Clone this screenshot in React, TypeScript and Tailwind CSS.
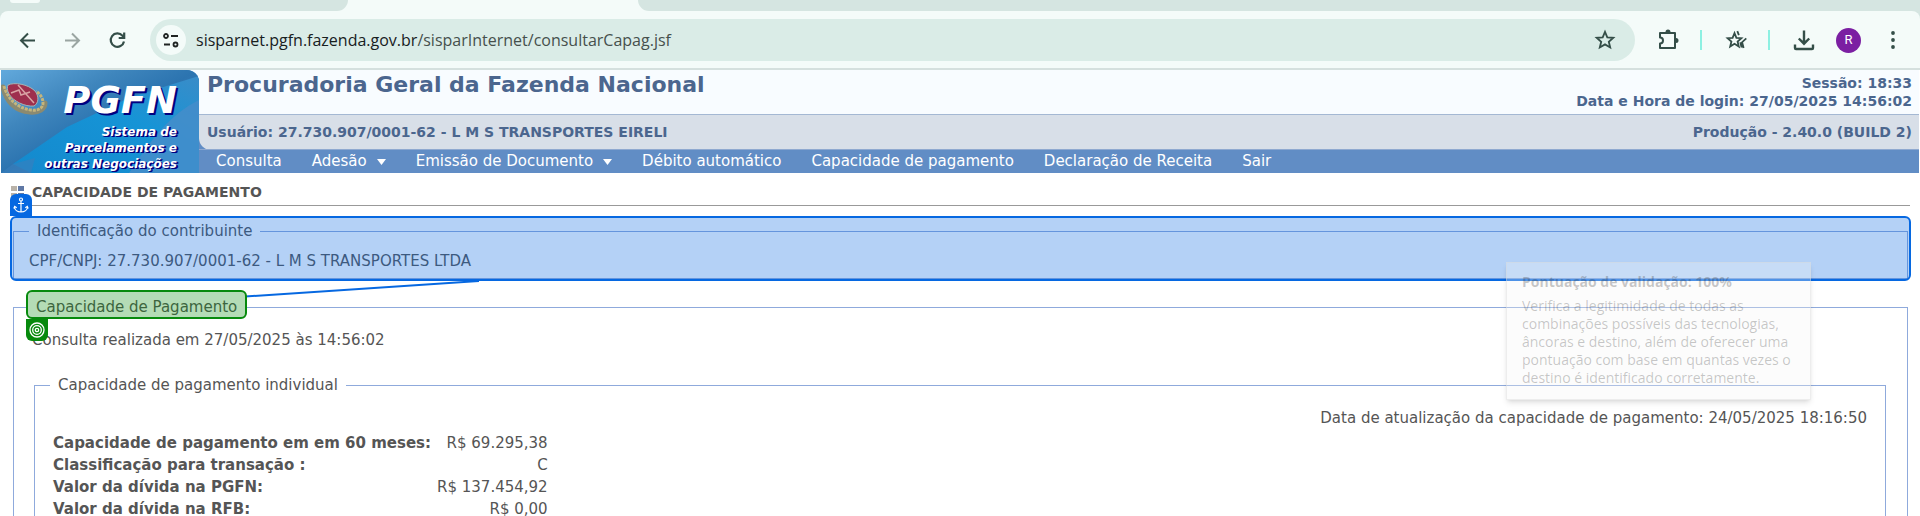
import React, { ReactNode } from 'react';

const icon = 'fill-none stroke-[#344e48]';

function NavIcon({ label, children }: { label: string; children: ReactNode }) {
  return (
    <button type="button" aria-label={label} className="flex size-6 shrink-0 items-center justify-center">
      {children}
    </button>
  );
}

function Star({ extra = false }: { extra?: boolean }) {
  return (
    <svg viewBox="0 0 22 22" className={`size-[22px] ${icon}`} strokeWidth="1.8">
      {extra ? (
        <>
          <path d="M9.500 4.200l1.900 4.600 5 .4-3.800 3.300 1.200 5-4.300-2.700-4.300 2.700 1.200-5-3.800-3.300 5-.4z" />
          <path d="M12.300 2.200l1.600 4M21.300 9.300l-4.200 3.900 1.500 5.700M15.300 13.300l1.300 5.200" />
        </>
      ) : (
        <path d="M11 2.800l2.300 5.500 6 .5-4.500 3.900 1.400 5.800-5.200-3.100-5.200 3.100 1.400-5.800-4.500-3.900 6-.5z" />
      )}
    </svg>
  );
}

function Browser() {
  return (
    <header className="bg-[#d5e5e1]">
      <div className="flex h-[11px] bg-[#f4fbf9]">
        <div className="flex w-[348px] items-start rounded-br-[14px] bg-[#d5e5e1] pl-[10px]">
          <div className="h-[3px] w-[30px] rounded-b-full bg-[#f4fbf9]" />
        </div>
        <div className="w-[290px]" />
        <div className="flex-1 rounded-bl-[14px] bg-[#d5e5e1]" />
      </div>
      <div className="flex h-[59px] items-start rounded-t-lg border-b-2 border-[#d5e0de] bg-[#f4fbf9] pt-2 pr-[15px] pl-[15px]">
        <div className="flex h-[42px] items-center gap-[21px]">
          <NavIcon label="Voltar">
            <svg viewBox="0 0 24 24" className={`size-6 ${icon}`} strokeWidth="2"><path d="M20 12.500H6M13 5.500l-7 7 7 7" /></svg>
          </NavIcon>
          <NavIcon label="Avançar">
            <svg viewBox="0 0 24 24" className="size-6 fill-none stroke-[#9aa5a2]" strokeWidth="2"><path d="M5 12.500h14M12 5.500l7 7-7 7" /></svg>
          </NavIcon>
          <NavIcon label="Recarregar">
            <svg viewBox="0 0 24 24" className={`size-6 ${icon}`} strokeWidth="2.200"><path d="M19 13.500A6.700 6.700 0 1 1 17.500 7.700L19 9.300M19.200 4.500V10h-5.500" /></svg>
          </NavIcon>
        </div>
        <div className="ml-[21px] flex h-[42px] flex-1 items-center rounded-full bg-[#daece7] pr-[18px] pl-[6px] font-['Open_Sans','Noto_Sans',sans-serif]">
          <button type="button" aria-label="Informações do site" className="flex size-[30px] items-center justify-center rounded-full bg-[#f4fbf9]">
            <svg viewBox="0 0 18 18" className="size-[18px] fill-none stroke-[#202423]" strokeWidth="1.800">
              <circle cx="4" cy="5" r="2" /><path d="M9 5h7M2 13.500h6" /><circle cx="13.500" cy="13.500" r="2" />
            </svg>
          </button>
          <a href="#url" className="ml-[10px] flex-1 text-[16px] leading-6 text-[#46504d]">
            <span className="text-[#17201e]">sisparnet.pgfn.fazenda.gov.br</span>/sisparInternet/consultarCapag.jsf
          </a>
          <NavIcon label="Favoritar"><Star /></NavIcon>
        </div>
        <div className="flex h-[42px] items-center pl-[21px]">
          <NavIcon label="Extensões">
            <svg viewBox="0 0 24 24" className={`size-6 ${icon}`} strokeWidth="2">
              <path d="M4 5h15v15H4v-4.500c4 0 4-6 0-6z" strokeLinejoin="round" />
              <path d="M9.500 4a2.500 2.500 0 0 1 5 0zM20 10a2.500 2.500 0 0 1 0 5z" className="fill-[#344e48]" stroke="none" />
            </svg>
          </NavIcon>
          <span className="ml-5 h-5 w-[2px] bg-[#8df0e2]" />
          <span className="ml-[22px] flex"><NavIcon label="Todos os favoritos"><Star extra /></NavIcon></span>
          <span className="ml-5 h-5 w-[2px] bg-[#8df0e2]" />
          <span className="ml-[22px] flex"><NavIcon label="Downloads">
            <svg viewBox="0 0 24 24" className={`size-6 ${icon}`} strokeWidth="2.400"><path d="M12 2.500v13M6.800 10.500l5.200 5.200 5.200-5.200M3 16.500v3.500a1 1 0 0 0 1 1h16a1 1 0 0 0 1-1v-3.500" /></svg>
          </NavIcon></span>
          <button type="button" aria-label="Perfil" className="ml-5 size-[25px] rounded-full bg-[#7b1fa2] font-['Roboto',sans-serif] text-[13px] text-white">R</button>
          <span className="ml-5 flex"><NavIcon label="Menu">
            <svg viewBox="0 0 24 24" className="size-6 fill-[#344e48]"><circle cx="12" cy="5" r="1.900" /><circle cx="12" cy="12" r="1.900" /><circle cx="12" cy="19" r="1.900" /></svg>
          </NavIcon></span>
        </div>
      </div>
    </header>
  );
}

function Brand() {
  return (
    <div className="shrink-0 bg-[#f8fcff]">
      <div className="relative h-full w-[198px] overflow-hidden rounded-tr-xl bg-[#3e83c3]">
        <svg viewBox="0 0 198 103" preserveAspectRatio="none" className="absolute inset-0 size-full">
          <defs>
            <linearGradient id="sky" x1="0" y1="0" x2="1" y2="1">
              <stop offset="0" stopColor="#62a9dc" /><stop offset=".3" stopColor="#3f86bd" /><stop offset=".5" stopColor="#2c74b0" /><stop offset="1" stopColor="#5090cc" />
            </linearGradient>
            <linearGradient id="beam" x1="0" y1="1" x2="1" y2="0">
              <stop offset="0" stopColor="#1489cd" /><stop offset=".6" stopColor="#1694d6" /><stop offset="1" stopColor="#3a8cc8" />
            </linearGradient>
          </defs>
          <path d="M0 0h198v103H0z" fill="url(#sky)" />
          <path d="M12 94L66 57 130 27l68-21v97H30z" fill="url(#beam)" />
          <path d="M128 103C150 70 168 45 198 30v73z" fill="#458dca" opacity=".85" />
          <path d="M12 94l22-6-4 15H0z" fill="#3b7fbd" opacity=".6" />
          <path d="M2 17c3 14 12 24 27 25 9 1 15-3 15-9" fill="none" stroke="#8b8a70" strokeWidth="5" strokeLinecap="round" />
          <path d="M3 16c3 12 13 22 27 24 7 1 12-2 12-7 0-5-3-9-7-12" fill="none" stroke="#c5b57c" strokeWidth="3" strokeDasharray="3 1" />
          <path d="M7 15C13 12 27 14 34 21c4 5 4 12-1 15-9 1-21-5-25-12-2-4-2-7-1-9z" fill="#9e2f4e" stroke="#a7b4b4" strokeWidth="1" />
          <path d="M17 15l16 18M10 23l8-3 2 5 9-3" fill="none" stroke="#d9a3a4" strokeWidth="1.500" />
        </svg>
        <div className="relative pt-[10px] pr-[22px] text-right font-bold text-white italic [text-shadow:2px_2px_0_#000080]">
          <div className="text-[37px] leading-[42px]">PGFN</div>
          <div className="pt-[2px] text-[12px] leading-4 [text-shadow:1px_1px_0_#000080,2px_1px_0_#000080]">Sistema de<br />Parcelamentos e<br />outras Negociações</div>
        </div>
      </div>
    </div>
  );
}

const menu: { label: string; arrow?: boolean }[] = [
  { label: 'Consulta' },
  { label: 'Adesão', arrow: true },
  { label: 'Emissão de Documento', arrow: true },
  { label: 'Débito automático' },
  { label: 'Capacidade de pagamento' },
  { label: 'Declaração de Receita' },
  { label: 'Sair' },
];

function SiteHeader() {
  return (
    <div className="mr-px ml-px flex bg-[#618dc5]">
      <Brand />
      <div className="min-w-0 flex-1 font-bold text-[#4b668e]">
        <div className="rounded-bl-xl bg-[#d8dfe8]">
          <div className="flex h-[45px] justify-between border-b border-[#a4b8d3] bg-[#f8fcff] pr-[7px] pl-2">
            <h1 className="text-[22px] leading-[30px]">Procuradoria Geral da Fazenda Nacional</h1>
            <div className="pt-1 text-right text-[14px] leading-[18px]">Sessão: 18:33<br />Data e Hora de login: 27/05/2025 14:56:02</div>
          </div>
          <div className="flex h-[35px] items-center justify-between border-b border-[#8fa9d0] pr-[7px] pl-2 text-[14px]">
            <span>Usuário: 27.730.907/0001-62 - L M S TRANSPORTES EIRELI</span>
            <span>Produção - 2.40.0 (BUILD 2)</span>
          </div>
        </div>
        <nav className="flex h-[23px] items-center gap-[30px] pl-[17px] text-[15px] font-normal text-white">
          {menu.map((m) => (
            <a key={m.label} href="#menu" className="flex items-center gap-[10px]">
              {m.label}
              {m.arrow && <svg viewBox="0 0 9 6" className="h-[6px] w-[9px] fill-white"><path d="M0 0h9L4.500 6z" /></svg>}
            </a>
          ))}
        </nav>
      </div>
    </div>
  );
}

const rows = [
  ['Capacidade de pagamento em em 60 meses:', 'R$ 69.295,38'],
  ['Classificação para transação :', 'C'],
  ['Valor da dívida na PGFN:', 'R$ 137.454,92'],
  ['Valor da dívida na RFB:', 'R$ 0,00'],
];

export default function App() {
  return (
    <div className="h-screen overflow-hidden bg-white font-['DejaVu_Sans',sans-serif] text-[15px] text-[#555]">
      <Browser />
      <SiteHeader />
      <main className="pr-3 pl-[13px]">
        <h2 className="-mx-[2px] flex h-[33px] items-center gap-[7px] border-b border-[#999] pt-[6px] text-[14px] font-bold">
          <svg viewBox="0 0 14 14" className="size-[14px]">
            <path d="M0 1h6v5H0zM0 8h6v5H0z" fill="#b9b2a8" /><path d="M7 1h6v5H7zM7 8h6v5H7z" fill="#5f78a5" />
          </svg>
          CAPACIDADE DE PAGAMENTO
        </h2>
        <section className="relative mt-[13px]">
          <fieldset className="h-[60px] border border-[#8faadc] px-[15px]">
            <legend className="px-2 leading-6">Identificação do contribuinte</legend>
            <p className="pt-[6px] leading-6">CPF/CNPJ: 27.730.907/0001-62 - L M S TRANSPORTES LTDA</p>
          </fieldset>
          <div className="absolute -inset-x-[3px] -top-[3px] -bottom-[2px] rounded-md border-2 border-[#0668e1] bg-[#0668e1]/30" />
          <div className="absolute -top-[25px] -left-[3px] flex size-[22px] items-center justify-center rounded-t-md bg-[#0668e1]">
            <svg viewBox="0 0 16 16" className="size-4 fill-none stroke-white" strokeWidth="1.200"><circle cx="8" cy="2.500" r="1.500" /><path d="M8 4v11M5 6.500h6M1.500 9.500c0 3.500 3 5.500 6.500 5.500s6.500-2 6.500-5.500M.8 11.500l.9-2.200 2 1.400M15.200 11.500l-.9-2.200-2 1.400" /></svg>
          </div>
          <svg viewBox="0 0 234 18" className="absolute top-[61px] left-[232px] h-[18px] w-[234px] fill-none stroke-[#0668e1]" strokeWidth="2"><path d="M0 16.500L234 1" /></svg>
        </section>
        <section className="mt-4">
          <fieldset className="border border-[#8faadc] px-[14px]">
            <legend className="relative px-2 leading-6">
              Capacidade de Pagamento
              <span className="absolute -inset-x-[2px] -top-[5px] bottom-0 rounded-md border-2 border-[#078a0d] bg-[#078a0d]/30" />
              <span className="absolute top-6 -left-[2px] z-10 flex size-[22px] items-center justify-center rounded-b-md bg-[#078a0d]">
                <svg viewBox="0 0 16 16" className="size-4 fill-none stroke-white" strokeWidth="1.300"><circle cx="8" cy="8" r="7" /><circle cx="8" cy="8" r="4.300" /><circle cx="8" cy="8" r="1.700" /></svg>
              </span>
            </legend>
            <p className="pt-[9px] pl-1 leading-6">Consulta realizada em 27/05/2025 às 14:56:02</p>
            <fieldset className="mt-[21px] mr-[7px] ml-[6px] h-[200px] border border-[#8faadc] px-[15px]">
              <legend className="px-2 leading-6">Capacidade de pagamento individual</legend>
              <p className="pt-[9px] pr-[3px] text-right leading-6">Data de atualização da capacidade de pagamento: 24/05/2025 18:16:50</p>
              <table className="mt-[2px] ml-[2px] leading-[22px]">
                <tbody>
                  {rows.map(([k, v]) => (
                    <tr key={k}><th scope="row" className="pr-[6px] pl-px text-left text-[15px]">{k}</th><td className="text-right">{v}</td></tr>
                  ))}
                </tbody>
              </table>
            </fieldset>
          </fieldset>
        </section>
      </main>
      <aside className="absolute top-[262px] right-[109px] w-[305px] border border-[#d8d8d8]/40 bg-[#f6f6f6]/30 px-[15px] pt-[10px] pb-3 font-['Open_Sans','Noto_Sans',sans-serif] text-[14px] leading-[18px] text-[#222]/25 shadow-md shadow-black/10">
        <h3 className="pb-[6px] font-bold">Pontuação de validação: 100%</h3>
        <p>Verifica a legitimidade de todas as<br />combinações possíveis das tecnologias,<br />âncoras e destino, além de oferecer uma<br />pontuação com base em quantas vezes o<br />destino é identificado corretamente.</p>
      </aside>
    </div>
  );
}
